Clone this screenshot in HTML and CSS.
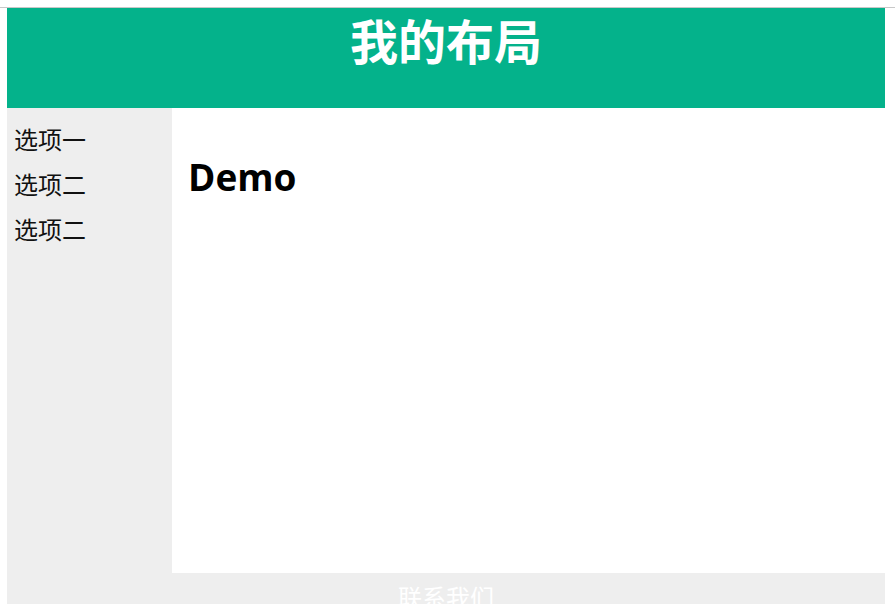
FILE: index.html
```html
<!DOCTYPE html>
<html lang="zh-CN">
<head>
<meta charset="utf-8">
<title>我的布局</title>
<link rel="stylesheet" href="styles.css">
</head>
<body>
<div class="page">
  <header class="header">
    <h1 class="title">我的布局</h1>
  </header>
  <div class="main">
    <nav class="sidebar">
      <div class="item">选项一</div>
      <div class="item">选项二</div>
      <div class="item">选项二</div>
    </nav>
    <section class="content">
      <h1 class="demo">Demo</h1>
    </section>
  </div>
  <footer class="footer">联系我们</footer>
</div>
</body>
</html>
```

FILE: styles.css
```css
html {
  background: #fff linear-gradient(#c8c8c8, #c8c8c8) 0 7px / 100% 1px no-repeat;
}
body {
  margin: 8px 0 0 7px;
  font-family: "Noto Sans CJK SC", "Noto Sans", sans-serif;
  overflow: hidden;
}
.page {
  width: 878px;
}
.header {
  height: 100px;
  background: #04b28b;
  text-align: center;
}
.title {
  margin: 0;
  font-size: 48px;
  line-height: 62px;
  font-weight: 700;
  color: #fff;
}
.main {
  display: grid;
  grid-template-columns: 165px 1fr;
  height: 465px;
}
.sidebar {
  background: #eee;
  padding-top: 8px;
}
.item {
  padding-left: 7px;
  font-size: 24px;
  line-height: 45px;
  color: #111;
}
.content {
  background: #fff;
  padding: 0 16px;
}
.demo {
  margin: 47px 0 0;
  font-family: "Open Sans", "Noto Sans", sans-serif;
  font-size: 37px;
  line-height: 44px;
  letter-spacing: 0;
  font-weight: 700;
  color: #000;
}
.footer {
  height: 48px;
  background: #eee;
  color: #fff;
  text-align: center;
  font-size: 24px;
  line-height: 48px;
}
```
